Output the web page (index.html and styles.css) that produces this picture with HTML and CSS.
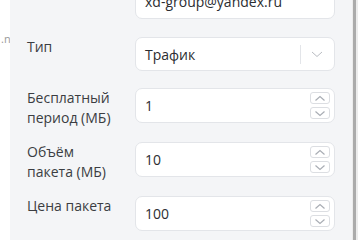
FILE: index.html
```html
<!DOCTYPE html>
<html lang="ru">
<head>
<meta charset="utf-8">
<link rel="stylesheet" href="styles.css">
</head>
<body>
<div class="page">
  <aside class="side"><span class="side__text">.n</span></aside>
  <main class="panel">
    <form class="form">
      <div class="row row--email">
        <label class="label"></label>
        <div class="field"><span class="value">xd-group@yandex.ru</span></div>
      </div>
      <div class="row row--single">
        <label class="label">Тип</label>
        <div class="field field--select">
          <span class="value">Трафик</span>
          <span class="select__divider"></span>
          <svg class="select__chevron" width="12" height="7" viewBox="0 0 12 7"><path d="M1 1l5 4.5L11 1" fill="none" stroke="#b9bcc2" stroke-width="1"/></svg>
        </div>
      </div>
      <div class="row">
        <label class="label">Бесплатный<br>период (МБ)</label>
        <div class="field field--number">
          <span class="value">1</span>
          <span class="spin">
            <span class="spin__btn"><svg width="12" height="7" viewBox="0 0 12 7"><path d="M1.5 5.5L6 1.5l4.5 4" fill="none" stroke="#a9adb4" stroke-width="1.2"/></svg></span>
            <span class="spin__btn"><svg width="12" height="7" viewBox="0 0 12 7"><path d="M1.5 1.5L6 5.5l4.5-4" fill="none" stroke="#a9adb4" stroke-width="1.2"/></svg></span>
          </span>
        </div>
      </div>
      <div class="row">
        <label class="label">Объём<br>пакета (МБ)</label>
        <div class="field field--number">
          <span class="value">10</span>
          <span class="spin">
            <span class="spin__btn"><svg width="12" height="7" viewBox="0 0 12 7"><path d="M1.5 5.5L6 1.5l4.5 4" fill="none" stroke="#a9adb4" stroke-width="1.2"/></svg></span>
            <span class="spin__btn"><svg width="12" height="7" viewBox="0 0 12 7"><path d="M1.5 1.5L6 5.5l4.5-4" fill="none" stroke="#a9adb4" stroke-width="1.2"/></svg></span>
          </span>
        </div>
      </div>
      <div class="row">
        <label class="label">Цена пакета</label>
        <div class="field field--number">
          <span class="value">100</span>
          <span class="spin">
            <span class="spin__btn"><svg width="12" height="7" viewBox="0 0 12 7"><path d="M1.5 5.5L6 1.5l4.5 4" fill="none" stroke="#a9adb4" stroke-width="1.2"/></svg></span>
            <span class="spin__btn"><svg width="12" height="7" viewBox="0 0 12 7"><path d="M1.5 1.5L6 5.5l4.5-4" fill="none" stroke="#a9adb4" stroke-width="1.2"/></svg></span>
          </span>
        </div>
      </div>
    </form>
  </main>
  <div class="scroll"><span class="scroll__thumb"></span></div>
</div>
</body>
</html>
```

FILE: styles.css
```css
* { box-sizing: border-box; }
html, body { margin: 0; padding: 0; }
body {
  width: 358px;
  height: 240px;
  overflow: hidden;
  background: #ffffff;
  font-family: "Open Sans", "Noto Sans", sans-serif;
}
.page {
  display: flex;
  height: 240px;
}
.side {
  width: 10px;
  flex: none;
  background: #ffffff;
  overflow: hidden;
}
.side__text {
  display: block;
  margin-top: 32px;
  margin-left: 1px;
  font-size: 11px;
  line-height: 14px;
  color: #9a9a9a;
  white-space: nowrap;
}
.panel {
  width: 342px;
  flex: none;
  background: #f4f5f7;
  padding: 0 17px 0 17px;
  overflow: hidden;
}
.form {
  margin-top: -16px;
}
.row {
  display: flex;
  align-items: flex-start;
  min-height: 40px;
  margin-bottom: 14px;
}
.row--email { min-height: 39px; }
.row--single { min-height: 37px; }
.label {
  width: 108px;
  flex: none;
  font-size: 14px;
  line-height: 20px;
  color: #3b3d42;
  padding-top: 0;
}
.field {
  width: 200px;
  height: 35px;
  flex: none;
  display: flex;
  align-items: center;
  background: #ffffff;
  border: 1px solid #e3e5e9;
  border-radius: 7px;
  padding: 0 4px 0 9px;
}
.field--select { height: 34px; }
.value {
  flex: 1;
  font-size: 14px;
  color: #2b2d31;
  white-space: nowrap;
}
.select__divider {
  width: 1px;
  height: 19px;
  background: #e3e5e9;
  margin-right: 10px;
}
.select__chevron {
  margin-right: 7px;
}
.spin {
  display: flex;
  flex-direction: column;
  gap: 3px;
}
.spin__btn {
  width: 20px;
  height: 12px;
  border: 1px solid #dcdee2;
  border-radius: 3px;
  display: flex;
  align-items: center;
  justify-content: center;
  background: #ffffff;
}
.scroll {
  flex: 1;
  background: #ececec;
  display: flex;
  padding-left: 1px;
}
.scroll__thumb {
  width: 3px;
  background: #ababab;
}
```
